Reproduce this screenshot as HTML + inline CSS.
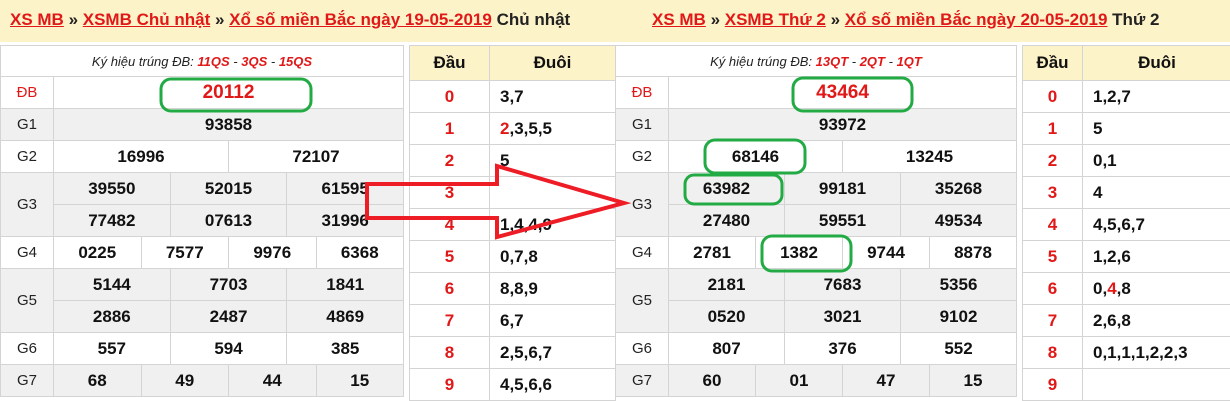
<!DOCTYPE html>
<html><head><meta charset="utf-8"><style>
*{margin:0;padding:0;box-sizing:border-box}
body{width:1230px;height:400px;background:#fff;font-family:"Liberation Sans",Arial,sans-serif;position:relative;overflow:hidden}
.hd{position:absolute;top:0;left:0;width:1230px;height:42px;background:#fdf3c8}
.ht{position:absolute;top:10px;font-size:17px;font-weight:bold;color:#222;white-space:nowrap}
.ht a{color:#e01818;text-decoration:underline}
.res{position:absolute;top:45px;border:1px solid #d4d4d4;border-bottom:none}
.cap{height:31px;line-height:31px;text-align:center;font-style:italic;font-size:13px;color:#222;border-bottom:1px solid #d4d4d4}
.cap b{color:#e01818;font-weight:bold}
.r{display:flex;height:32px;border-bottom:1px solid #d4d4d4}
.r.d{height:64px}
.g{background:#f0f0f0}
.l{width:53px;border-right:1px solid #d4d4d4;display:flex;align-items:center;justify-content:center;font-size:15px;color:#222;flex:none}
.v{flex:1;display:flex;flex-direction:column}
.s{flex:1;display:flex}
.s+.s{border-top:1px solid #d4d4d4}
.c{flex:1;display:flex;align-items:center;justify-content:center;font-size:17px;font-weight:bold;color:#111}
.c+.c{border-left:1px solid #d4d4d4}
.red{color:#e01818}
.lt{position:absolute;top:45px;border-collapse:collapse}
.lt td,.lt th{border:1px solid #d4d4d4;height:32px;font-size:17px;font-weight:bold}
.lt th{background:#fdf3c8;height:35px;color:#111}
.lt td:first-child{color:#e01818;text-align:center}
.lt td+td{padding-left:10px;color:#111}
</style></head><body>
<div class="hd"></div>
<div class="ht" style="left:10px"><a>XS MB</a> » <a>XSMB Chủ nhật</a> » <a>Xổ số miền Bắc ngày 19-05-2019</a> Chủ nhật</div>
<div class="ht" style="left:652px"><a>XS MB</a> » <a>XSMB Thứ 2</a> » <a>Xổ số miền Bắc ngày 20-05-2019</a> Thứ 2</div>

<div class="res" style="left:0;width:404px">
<div class="cap">Ký hiệu trúng ĐB: <b>11QS</b> - <b>3QS</b> - <b>15QS</b></div>
<div class="r"><div class="l red">ĐB</div><div class="c red" style="font-size:19px">20112</div></div>
<div class="r g"><div class="l">G1</div><div class="c">93858</div></div>
<div class="r"><div class="l">G2</div><div class="c">16996</div><div class="c">72107</div></div>
<div class="r d g"><div class="l">G3</div><div class="v"><div class="s"><div class="c">39550</div><div class="c">52015</div><div class="c">61595</div></div><div class="s"><div class="c">77482</div><div class="c">07613</div><div class="c">31996</div></div></div></div>
<div class="r"><div class="l">G4</div><div class="c">0225</div><div class="c">7577</div><div class="c">9976</div><div class="c">6368</div></div>
<div class="r d g"><div class="l">G5</div><div class="v"><div class="s"><div class="c">5144</div><div class="c">7703</div><div class="c">1841</div></div><div class="s"><div class="c">2886</div><div class="c">2487</div><div class="c">4869</div></div></div></div>
<div class="r"><div class="l">G6</div><div class="c">557</div><div class="c">594</div><div class="c">385</div></div>
<div class="r g"><div class="l">G7</div><div class="c">68</div><div class="c">49</div><div class="c">44</div><div class="c">15</div></div>
</div>

<table class="lt" style="left:409px;width:207px">
<tr><th style="width:80px">Đầu</th><th>Đuôi</th></tr>
<tr><td>0</td><td>3,7</td></tr>
<tr><td>1</td><td><span class="red">2</span>,3,5,5</td></tr>
<tr><td>2</td><td>5</td></tr>
<tr><td>3</td><td></td></tr>
<tr><td>4</td><td>1,4,4,9</td></tr>
<tr><td>5</td><td>0,7,8</td></tr>
<tr><td>6</td><td>8,8,9</td></tr>
<tr><td>7</td><td>6,7</td></tr>
<tr><td>8</td><td>2,5,6,7</td></tr>
<tr><td>9</td><td>4,5,6,6</td></tr>
</table>

<div class="res" style="left:615px;width:402px">
<div class="cap">Ký hiệu trúng ĐB: <b>13QT</b> - <b>2QT</b> - <b>1QT</b></div>
<div class="r"><div class="l red">ĐB</div><div class="c red" style="font-size:19px">43464</div></div>
<div class="r g"><div class="l">G1</div><div class="c">93972</div></div>
<div class="r"><div class="l">G2</div><div class="c">68146</div><div class="c">13245</div></div>
<div class="r d g"><div class="l">G3</div><div class="v"><div class="s"><div class="c">63982</div><div class="c">99181</div><div class="c">35268</div></div><div class="s"><div class="c">27480</div><div class="c">59551</div><div class="c">49534</div></div></div></div>
<div class="r"><div class="l">G4</div><div class="c">2781</div><div class="c">1382</div><div class="c">9744</div><div class="c">8878</div></div>
<div class="r d g"><div class="l">G5</div><div class="v"><div class="s"><div class="c">2181</div><div class="c">7683</div><div class="c">5356</div></div><div class="s"><div class="c">0520</div><div class="c">3021</div><div class="c">9102</div></div></div></div>
<div class="r"><div class="l">G6</div><div class="c">807</div><div class="c">376</div><div class="c">552</div></div>
<div class="r g"><div class="l">G7</div><div class="c">60</div><div class="c">01</div><div class="c">47</div><div class="c">15</div></div>
</div>

<table class="lt" style="left:1022px;width:210px">
<tr><th style="width:60px">Đầu</th><th>Đuôi</th></tr>
<tr><td>0</td><td>1,2,7</td></tr>
<tr><td>1</td><td>5</td></tr>
<tr><td>2</td><td>0,1</td></tr>
<tr><td>3</td><td>4</td></tr>
<tr><td>4</td><td>4,5,6,7</td></tr>
<tr><td>5</td><td>1,2,6</td></tr>
<tr><td>6</td><td>0,<span class="red">4</span>,8</td></tr>
<tr><td>7</td><td>2,6,8</td></tr>
<tr><td>8</td><td>0,1,1,1,2,2,3</td></tr>
<tr><td>9</td><td></td></tr>
</table>

<svg style="position:absolute;left:0;top:0" width="1230" height="400">
<g fill="none" stroke="#22aa44" stroke-width="3">
<rect x="161" y="79" width="150" height="32" rx="10"/>
<rect x="793" y="78" width="119" height="33" rx="10"/>
<rect x="705" y="140" width="100" height="33" rx="10"/>
<rect x="685" y="175" width="97" height="29" rx="9"/>
<rect x="762" y="236" width="89" height="35" rx="10"/>
</g>
<polygon points="367,184 497,184 497,166 624,203 497,237 497,218 367,218" fill="none" stroke="#ee1c25" stroke-width="4"/>
</svg>
</body></html>
